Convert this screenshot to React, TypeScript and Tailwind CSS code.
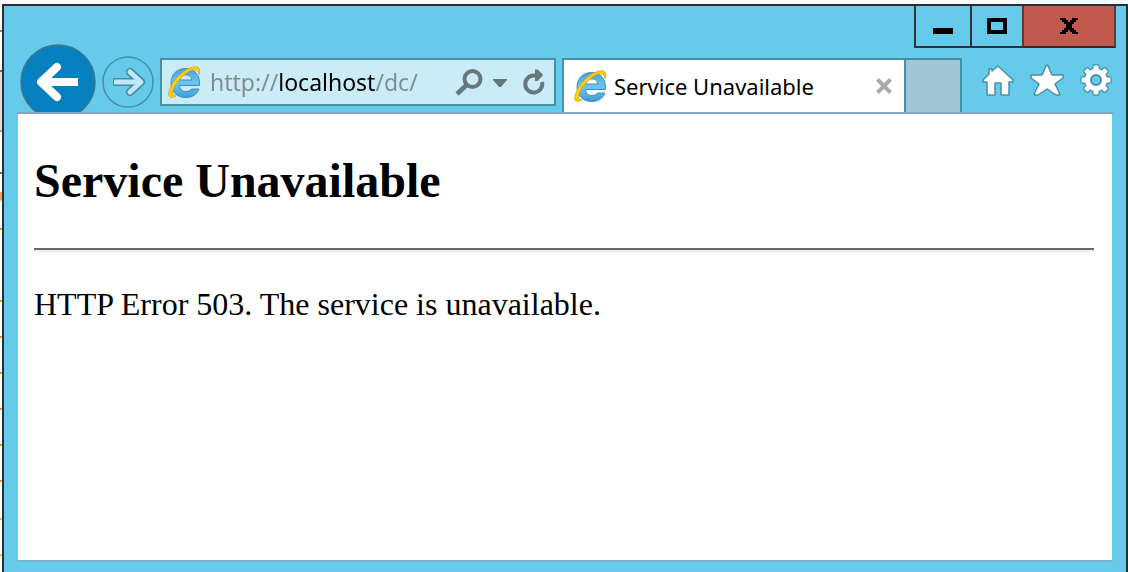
import React, { useState } from "react";

interface EdgeMark {
  y: number;
  height: number;
  color: string;
}

// Sliver of the window that sits behind the browser
const edgeMarks: EdgeMark[] = [
  { y: 30, height: 2, color: "#858585" },
  { y: 70, height: 2, color: "#6b6b6b" },
  { y: 72, height: 58, color: "#d9dee2" },
  { y: 130, height: 2, color: "#a3a3a3" },
  { y: 172, height: 2, color: "#6b6b6b" },
  { y: 192, height: 8, color: "#f5a65b" },
  { y: 200, height: 2, color: "#fbe08c" },
  { y: 228, height: 2, color: "#d99a3c" },
  { y: 300, height: 2, color: "#d99a3c" },
  { y: 336, height: 2, color: "#d99a3c" },
  { y: 372, height: 2, color: "#d99a3c" },
  { y: 408, height: 2, color: "#d99a3c" },
  { y: 444, height: 2, color: "#d99a3c" },
  { y: 480, height: 2, color: "#d99a3c" },
  { y: 518, height: 2, color: "#f2b566" },
  { y: 554, height: 2, color: "#f2b566" },
];

const BrowserLogo: React.FC = () => (
  <svg width="32" height="32" viewBox="0 0 32 32" className="shrink-0" aria-hidden="true">
    <defs>
      <linearGradient id="logoBlue" x1="0" y1="0" x2="0" y2="1">
        <stop offset="0" stopColor="#4aa3d8" />
        <stop offset="0.5" stopColor="#6cc5f1" />
        <stop offset="1" stopColor="#3f9bd4" />
      </linearGradient>
    </defs>
    <path
      d="M31.5 19.500H11.500C12 23.500 14.500 25.500 18 25.500C20.500 25.500 22.500 24.600 23.500 23H31C28.800 28.600 24 31.500 17.600 31.500C9 31.500 3 25.800 3 17C3 8.400 9 2.500 17.400 2.500C26 2.500 31.500 8.600 31.500 17ZM11.800 14H24C23.400 10.600 21.200 8.800 17.900 8.800C14.600 8.800 12.400 10.600 11.800 14Z"
      fill="url(#logoBlue)"
      stroke="#3b8fc6"
      strokeWidth="1"
    />
    <path
      d="M31 8.500C32.500 3.500 31.500 .8 27.500 .8C20.500 1 10.500 8 5 17C1 23.500 -.5 29.500 2 31C3.500 31.800 5.500 31.200 8 30C5.200 29.800 4 28.400 4.600 25.500C6 19 13 10 20.500 5.500C25.500 2.800 30 3 31 8.500Z"
      fill="#ffd60a"
      stroke="#eda413"
      strokeWidth="1"
    />
  </svg>
);

const gearTeeth = [0, 45, 90, 135];

const GearShape: React.FC = () => (
  <>
    <circle cx="16" cy="16" r="11" />
    {gearTeeth.map((angle) => (
      <rect key={angle} x="13.5" y="1.5" width="5" height="29" rx="1" transform={`rotate(${angle} 16 16)`} />
    ))}
  </>
);

const TitleButtons: React.FC = () => (
  <div className="flex h-[42px] justify-end pr-[10px]">
    <button
      type="button"
      aria-label="Minimize"
      className="flex w-[56px] justify-center border-b-2 border-l-2 border-[#2f3133] pt-[22px]"
    >
      <span className="h-[6px] w-5 bg-black" />
    </button>
    <button
      type="button"
      aria-label="Maximize"
      className="flex w-[52px] justify-center border-b-2 border-l-2 border-[#2f3133] pt-3"
    >
      <span className="h-4 w-5 border-4 border-black" />
    </button>
    <button
      type="button"
      aria-label="Close"
      className="flex w-[94px] justify-center border-x-2 border-b-2 border-x-[#5b3a3c] border-b-[#33292b] bg-[#c1594f] pt-3"
    >
      <svg width="18" height="16" viewBox="0 0 18 16" aria-hidden="true">
        <path
          d="M0 0H6V2H8V4H10V2H12V0H18V2H16V4H14V6H12V10H14V12H16V14H18V16H12V14H10V12H8V14H6V16H0V14H2V12H4V10H6V6H4V4H2V2H0Z"
          fill="#000"
        />
      </svg>
    </button>
  </div>
);

const AddressBar: React.FC = () => {
  const [address, setAddress] = useState("http://localhost/dc/");

  return (
    <form
      className="mt-[14px] ml-[6px] flex h-12 min-w-0 flex-1 items-center border-2 border-[#4590a5] bg-[#c9ecf6] pl-[6px] pr-2"
      onSubmit={(e) => e.preventDefault()}
    >
      <BrowserLogo />
      {/* the host name is darker than the rest of the address */}
      <input
        type="text"
        aria-label="Address"
        spellCheck={false}
        value={address}
        onChange={(e) => setAddress(e.target.value)}
        className="ml-[10px] h-10 min-w-0 flex-1 bg-[linear-gradient(to_right,#7f8b8e_69px,#000_69px,#000_166px,#7f8b8e_166px)] bg-clip-text text-[23px] text-transparent caret-black outline-none"
      />
      <button type="button" aria-label="Search" className="shrink-0">
        <svg width="28" height="28" viewBox="0 0 28 28" fill="none" stroke="#65777b" aria-hidden="true">
          <circle cx="17.5" cy="11" r="8" strokeWidth="4" />
          <path d="M11.5 17L2 26" strokeWidth="4.500" />
        </svg>
      </button>
      <button type="button" aria-label="Show address list" className="ml-[9px] shrink-0">
        <svg width="16" height="28" viewBox="0 0 16 28" aria-hidden="true">
          <path d="M1 11H15V12L9 19H7L1 12Z" fill="#65777b" />
        </svg>
      </button>
      <button type="button" aria-label="Refresh" className="ml-[14px] shrink-0">
        <svg width="24" height="28" viewBox="0 0 24 28" aria-hidden="true">
          <path d="M14 7.5H12A8.5 8.5 0 1 0 20 14" fill="none" stroke="#65777b" strokeWidth="4" />
          <path d="M13 1.5H15.500L20.500 6V8L15.500 13H13Z" fill="#65777b" />
        </svg>
      </button>
    </form>
  );
};

const Toolbar: React.FC = () => (
  <div className="-mt-1 flex h-[68px] items-start overflow-hidden pl-4 pr-[14px]">
    <button type="button" aria-label="Back" className="shrink-0">
      <svg width="76" height="76" viewBox="0 0 76 76" aria-hidden="true">
        <circle cx="38" cy="38" r="37" fill="#0580bf" stroke="#40768c" strokeWidth="1.5" />
        <path d="M58 38H24" stroke="#fff" strokeWidth="8" />
        <path
          d="M37 23L21 38L37 53"
          fill="none"
          stroke="#fff"
          strokeWidth="8"
          strokeLinecap="round"
          strokeLinejoin="round"
        />
      </svg>
    </button>
    <button type="button" aria-label="Forward" className="mt-3 ml-[6px] shrink-0">
      <svg width="52" height="52" viewBox="0 0 52 52" fill="none" aria-hidden="true">
        <circle cx="26" cy="26" r="25" stroke="#4590a5" strokeWidth="1.5" />
        <path d="M11 26H38M28 16L39 26L28 36" stroke="#4590a5" strokeWidth="8" strokeLinejoin="round" strokeLinecap="square" className="[stroke-linecap:butt]" />
        <path d="M28 16L39 26L28 36" stroke="#4590a5" strokeWidth="8" strokeLinejoin="round" strokeLinecap="round" />
        <path d="M12 26H38" stroke="#bfe9f6" strokeWidth="5" />
        <path d="M28 16L39 26L28 36" stroke="#bfe9f6" strokeWidth="5" strokeLinejoin="round" strokeLinecap="round" />
      </svg>
    </button>
    <AddressBar />
    <div className="mt-[14px] ml-[6px] flex h-[54px] shrink-0">
      <div className="flex w-[344px] items-center border-x-2 border-t-2 border-[#4590a5] bg-white pl-[10px] pr-3">
        <BrowserLogo />
        <span className="ml-2 flex-1 truncate text-[22px] text-black">Service Unavailable</span>
        <button type="button" aria-label="Close tab" className="shrink-0">
          <svg width="16" height="16" viewBox="0 0 16 16" aria-hidden="true">
            <path d="M1.5 1.5L14.5 14.5M14.5 1.5L1.5 14.5" stroke="#aaa" strokeWidth="4" />
          </svg>
        </button>
      </div>
      <button
        type="button"
        aria-label="New tab"
        className="w-[56px] border-t-2 border-r-2 border-[#4590a5] bg-[#a0c6d6]"
      />
    </div>
    <div className="mt-5 ml-5 flex shrink-0 gap-4">
      <button type="button" aria-label="Home">
        <svg width="32" height="32" viewBox="0 0 32 32" aria-hidden="true">
          <path
            d="M16 2L21 6.5L31 16V18H27V31H19V19H13V31H5V18H1V16L7 10V5H10V7Z"
            fill="#fff"
            stroke="#4590a5"
            strokeWidth="1.5"
            strokeLinejoin="round"
          />
        </svg>
      </button>
      <button type="button" aria-label="Favorites">
        <svg width="34" height="32" viewBox="0 0 34 32" aria-hidden="true">
          <path
            d="M16.5 1H17.5L22 11H33V14L25 20L29.5 29V31H26L17 25L8 31H4.5V29L9 20L1 14V11H12Z"
            fill="#fff"
            stroke="#4590a5"
            strokeWidth="1.5"
            strokeLinejoin="round"
          />
        </svg>
      </button>
      <button type="button" aria-label="Tools">
        <svg width="32" height="32" viewBox="0 0 32 32" aria-hidden="true">
          <g fill="#4590a5" stroke="#4590a5" strokeWidth="2.5">
            <GearShape />
          </g>
          <g fill="#fff">
            <GearShape />
          </g>
          <circle cx="16" cy="16" r="5" fill="#66cbeb" stroke="#4590a5" strokeWidth="2" />
        </svg>
      </button>
    </div>
  </div>
);

const ErrorPage: React.FC = () => (
  <main className="mx-3 flex-1 border-2 border-x-[#66cbeb] border-t-[#7fa6c2] border-b-[#77b3d1] bg-white pl-4 pr-[18px] pt-10 font-['Liberation_Serif','Times_New_Roman',serif] text-black">
    <h2 className="text-[48px] leading-[54px] font-bold">Service Unavailable</h2>
    <hr className="mt-10 border-t-2 border-b-2 border-t-[#696969] border-b-[#ededed]" />
    <p className="mt-[34px] text-[32px] leading-9">HTTP Error 503. The service is unavailable.</p>
  </main>
);

const App: React.FC = () => {
  return (
    <div className="flex min-h-screen bg-[#f8fafc] font-['Noto_Sans','Open_Sans',sans-serif]">
      <svg width="2" height="572" viewBox="0 0 2 572" className="shrink-0" aria-hidden="true">
        <rect y="32" width="2" height="540" fill="#fff" />
        {edgeMarks.map((mark) => (
          <rect key={mark.y} y={mark.y} width="2" height={mark.height} fill={mark.color} />
        ))}
      </svg>
      <div className="flex min-w-0 flex-1 flex-col pt-1">
        <div className="flex flex-1 flex-col border-x-2 border-t-2 border-[#2b2f33] bg-[#66cbeb] pb-[10px]">
          <TitleButtons />
          <Toolbar />
          <ErrorPage />
        </div>
      </div>
    </div>
  );
};

export default App;
